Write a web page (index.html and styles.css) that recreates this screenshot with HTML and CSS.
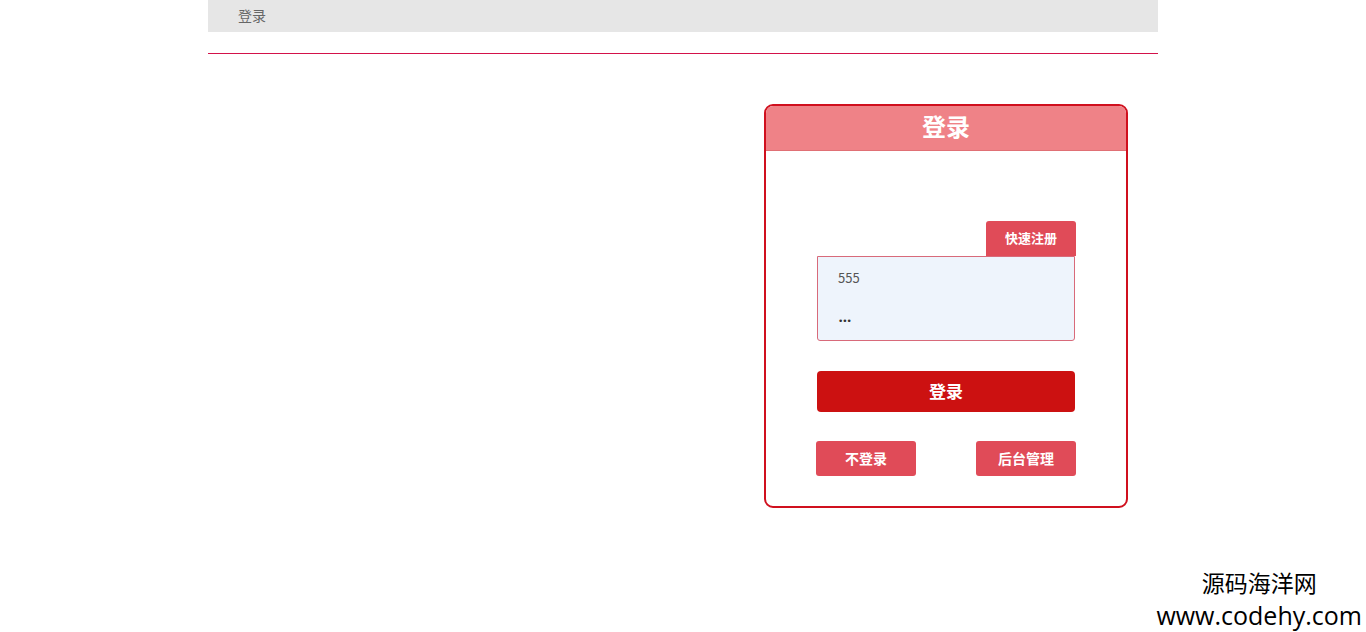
FILE: index.html
```html
<!DOCTYPE html>
<html lang="zh">
<head>
<meta charset="utf-8">
<title>登录</title>
<link rel="stylesheet" href="styles.css">
</head>
<body>
<div class="wrap">
  <div class="topbar"><span class="crumb">登录</span></div>
  <div class="rule"></div>
  <div class="card">
    <div class="card-head">登录</div>
    <div class="card-body">
      <div class="reg-row"><button class="btn btn-small">快速注册</button></div>
      <div class="fields">
        <div class="field">555</div>
        <div class="field pw">•••</div>
      </div>
      <button class="btn btn-login">登录</button>
      <div class="actions">
        <button class="btn btn-small btn-wide">不登录</button>
        <button class="btn btn-small btn-wide">后台管理</button>
      </div>
    </div>
  </div>
</div>
<div class="mark">
  <div class="mark-cn">源码海洋网</div>
  <div class="mark-url">www.codehy.com</div>
</div>
</body>
</html>
```
FILE: styles.css
```css
* { box-sizing: border-box; }
html, body { margin: 0; padding: 0; background: #fff; }
body {
  font-family: "Noto Sans CJK SC", "Noto Sans", sans-serif;
  height: 632px;
  overflow: hidden;
  position: relative;
}
.wrap {
  width: 950px;
  margin: 0 auto;
  display: flex;
  flex-direction: column;
}
.topbar {
  height: 32px;
  background: #e6e6e6;
  display: flex;
  align-items: center;
  padding-left: 30px;
}
.crumb { font-size: 14px; color: #666; padding-bottom: 2px; }
.rule {
  height: 1px;
  background: #d3124a;
  margin-top: 21px;
}
.card {
  align-self: flex-end;
  margin-right: 30px;
  margin-top: 50px;
  width: 364px;
  border: 2px solid #d0101e;
  border-radius: 9px;
  overflow: hidden;
}
.card-head {
  height: 45px;
  background: #ef8287;
  color: #fff;
  font-size: 24px;
  font-weight: bold;
  font-family: "Noto Sans CJK SC", serif;
  display: flex;
  align-items: center;
  justify-content: center;
  padding-bottom: 5px;
  border-bottom: 1px solid #e07075;
}
.card-body {
  padding: 70px 50px 30px 51px;
  display: flex;
  flex-direction: column;
}
.reg-row { display: flex; justify-content: flex-end; }
.btn {
  border: none;
  color: #fff;
  font-family: "Noto Sans CJK SC", sans-serif;
  font-weight: bold;
  cursor: pointer;
  padding: 0 0 2px;
}
.btn-small {
  height: 35px;
  width: 90px;
  background: #e04b58;
  font-size: 13px;
  border-radius: 3px 3px 0 0;
}
.fields {
  width: 258px;
  height: 85px;
  border: 1px solid #d86a7a;
  border-radius: 0 0 3px 3px;
  background: #eef4fc;
  display: flex;
  flex-direction: column;
  padding: 11px 20px 0;
  gap: 22px;
}
.field { font-size: 13px; color: #555; height: 20px; line-height: 20px; }
.field.pw {
  font-family: "DejaVu Sans", sans-serif;
  font-size: 9px;
  color: #333;
  letter-spacing: -1px;
  padding-top: 1px;
}
.btn-login {
  margin-top: 30px;
  width: 258px;
  height: 41px;
  background: #cc1111;
  border-radius: 4px;
  font-size: 17px;
}
.actions {
  margin-top: 29px;
  margin-left: -1px;
  display: flex;
  justify-content: space-between;
}
.btn-wide { width: 100px; border-radius: 3px; font-size: 14px; }
.mark {
  position: absolute;
  right: 4px;
  bottom: 0;
  display: flex;
  flex-direction: column;
  align-items: center;
  color: #000;
}
.mark-cn {
  font-family: "Noto Sans CJK SC", sans-serif;
  font-size: 23px;
  line-height: 34px;
  margin-bottom: -1px;
}
.mark-url {
  font-family: "Open Sans", sans-serif;
  font-size: 25px;
  line-height: 34px;
}
```
